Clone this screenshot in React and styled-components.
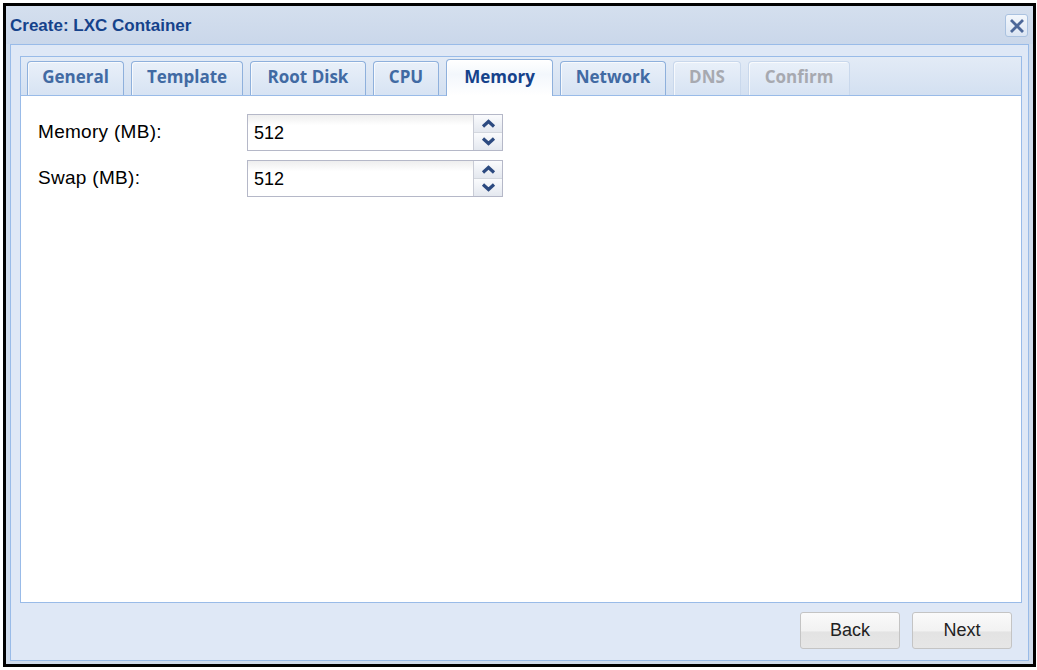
import React from "react";
import styled, { createGlobalStyle } from "styled-components";

const Global = createGlobalStyle`
  html, body { margin: 0; padding: 0; background: #ffffff; }
  body { font-family: "Liberation Sans", Arial, sans-serif; }
`;

const Window = styled.div`
  box-sizing: border-box;
  margin: 3px 0 0 3px;
  width: 1033px;
  height: 664px;
  border: 3px solid #000;
  background: #cfdbeb;
  display: flex;
  flex-direction: column;
`;

const Header = styled.div`
  height: 38px;
  display: flex;
  align-items: center;
  justify-content: space-between;
  padding: 1px 5px 0 4px;
  box-sizing: border-box;
  background: linear-gradient(#d4dfee, #cad7ea);
`;

const Title = styled.div`
  font-family: "Liberation Sans", Arial, sans-serif;
  font-weight: bold;
  font-size: 17px;
  color: #15428b;
`;

const CloseTool = styled.div`
  box-sizing: border-box;
  width: 23px;
  height: 23px;
  border: 1px solid #aac2e0;
  border-radius: 3px;
  background: linear-gradient(#f3f7fc, #dbe5f3);
  display: flex;
  align-items: center;
  justify-content: center;
`;

const Body = styled.div`
  flex: 1;
  margin: 0 4px 3px 4px;
  box-sizing: border-box;
  border: 1px solid #99bbe8;
  background: #dfe8f6;
  display: flex;
  flex-direction: column;
  padding: 11px 6px 0 9px;
`;

const TabPanel = styled.div`
  height: 547px;
  box-sizing: border-box;
  border: 1px solid #99bbe8;
  display: flex;
  flex-direction: column;
`;

const TabStrip = styled.div`
  height: 39px;
  box-sizing: border-box;
  background: linear-gradient(#e3ebf6, #d3e0f1);
  border-bottom: 1px solid #99bbe8;
  display: flex;
  align-items: flex-end;
  padding-left: 6px;
  gap: 7px;
`;

const Tab = styled.div`
  box-sizing: border-box;
  height: ${(p) => (p.$active ? "37px" : "34px")};
  margin-bottom: ${(p) => (p.$active ? "-1px" : "0")};
  width: ${(p) => p.$w}px;
  border: 1px solid ${(p) => (p.$disabled ? "#c9d8ec" : "#8eb0dc")};
  border-bottom: none;
  border-radius: 4px 4px 0 0;
  background: ${(p) =>
    p.$active
      ? "linear-gradient(#ffffff, #f3f7fc 40%, #ffffff)"
      : "linear-gradient(#e9f0f9, #d7e3f3)"};
  display: flex;
  align-items: center;
  justify-content: center;
  padding-bottom: ${(p) => (p.$active ? "3px" : "4px")};
  font-family: "Open Sans", "Noto Sans", sans-serif;
  font-weight: bold;
  font-size: 17px;
  color: ${(p) => (p.$active ? "#15428b" : p.$disabled ? "#a7a9b0" : "#416aa3")};
  box-shadow: inset 1px 1px 0 rgba(255, 255, 255, 0.7);
`;

const Panel = styled.div`
  flex: 1;
  background: #fff;
  padding: 18px 0 0 17px;
  display: flex;
  flex-direction: column;
  gap: 9px;
`;

const Row = styled.div`
  display: flex;
  align-items: center;
`;

const Label = styled.div`
  width: 209px;
  font-size: 19px;
  letter-spacing: 0.3px;
  color: #000;
  padding-bottom: 1px;
`;

const Spinner = styled.div`
  box-sizing: border-box;
  width: 256px;
  height: 37px;
  border: 1px solid #b5b8c8;
  display: flex;
`;

const Input = styled.div`
  flex: 1;
  background: linear-gradient(#eeeeee, #ffffff 30%);
  font-size: 18px;
  padding-left: 6px;
  padding-top: 2px;
  display: flex;
  align-items: center;
  color: #000;
`;

const Triggers = styled.div`
  width: 28px;
  border-left: 1px solid #c9ccd6;
  display: flex;
  flex-direction: column;
`;

const Trig = styled.div`
  flex: 1;
  display: flex;
  align-items: center;
  justify-content: center;
  background: linear-gradient(#fafbfd, #e4e8ef);
  border-top: ${(p) => (p.$down ? "1px solid #d3d7de" : "none")};
`;

const Footer = styled.div`
  flex: 1;
  display: flex;
  justify-content: flex-end;
  align-items: flex-start;
  padding: 9px 10px 0 0;
  gap: 12px;
`;

const Button = styled.div`
  box-sizing: border-box;
  width: 100px;
  height: 37px;
  border: 1px solid #c4c4c4;
  border-radius: 3px;
  background: linear-gradient(#fafafa, #f2f2f2 50%, #e3e3e3 55%, #e6e6e6);
  display: flex;
  align-items: center;
  justify-content: center;
  font-size: 18px;
  color: #222;
`;

const Chevron = ({ up }) => (
  <svg width="15" height="9" viewBox="0 0 15 9">
    <path
      d={up ? "M2 7.5 L7.5 2.5 L13 7.5" : "M2 1.5 L7.5 6.5 L13 1.5"}
      fill="none"
      stroke="#2c4a80"
      strokeWidth="3.2"
    />
  </svg>
);

const tabs = [
  { t: "General", w: 97 },
  { t: "Template", w: 112 },
  { t: "Root Disk", w: 116 },
  { t: "CPU", w: 66 },
  { t: "Memory", w: 107, active: true },
  { t: "Network", w: 106 },
  { t: "DNS", w: 68, disabled: true },
  { t: "Confirm", w: 102, disabled: true },
];

const fields = [
  { label: "Memory (MB):", value: "512" },
  { label: "Swap (MB):", value: "512" },
];

export default function App() {
  return (
    <>
      <Global />
      <Window>
        <Header>
          <Title>Create: LXC Container</Title>
          <CloseTool>
            <svg width="16" height="16" viewBox="0 0 16 16">
              <path d="M2 2 L14 14 M14 2 L2 14" stroke="#4d6899" strokeWidth="2.8" />
            </svg>
          </CloseTool>
        </Header>
        <Body>
          <TabPanel>
            <TabStrip>
              {tabs.map((tb) => (
                <Tab key={tb.t} $w={tb.w} $active={tb.active} $disabled={tb.disabled}>
                  {tb.t}
                </Tab>
              ))}
            </TabStrip>
            <Panel>
              {fields.map((f) => (
                <Row key={f.label}>
                  <Label>{f.label}</Label>
                  <Spinner>
                    <Input>{f.value}</Input>
                    <Triggers>
                      <Trig>
                        <Chevron up />
                      </Trig>
                      <Trig $down>
                        <Chevron />
                      </Trig>
                    </Triggers>
                  </Spinner>
                </Row>
              ))}
            </Panel>
          </TabPanel>
          <Footer>
            <Button>Back</Button>
            <Button>Next</Button>
          </Footer>
        </Body>
      </Window>
    </>
  );
}
